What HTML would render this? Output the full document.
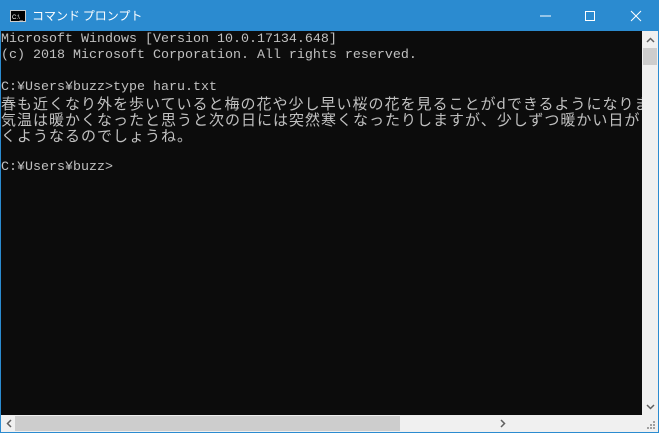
<!DOCTYPE html>
<html><head><meta charset="utf-8"><style>
html,body{margin:0;padding:0;width:659px;height:433px;overflow:hidden;background:#2b8bd0;}
#win{position:absolute;left:0;top:0;width:657px;height:431px;border:1px solid #2b8bd0;background:#2b8bd0;}
#title{position:absolute;left:0;top:0;width:657px;height:30px;background:#2b8bd0;}
#title .t{position:absolute;left:31px;top:7px;color:#fff;font:12px "Noto Sans CJK JP",sans-serif;line-height:16px;}
#con{position:absolute;left:0;top:30px;width:641px;height:384px;background:#0c0c0c;overflow:hidden;}
.l{position:absolute;left:0;height:16px;line-height:16px;color:#c0c0c0;white-space:pre;font-family:"Liberation Mono","Noto Sans CJK JP",monospace;font-size:13.33px;}
.j{font-family:"Noto Sans CJK JP","Liberation Mono",monospace;font-size:15px;letter-spacing:1px;}
#vs{position:absolute;left:641px;top:30px;width:16px;height:384px;background:#f0f0f0;}
#hs{position:absolute;left:0;top:414px;width:657px;height:17px;background:#f0f0f0;}
</style></head><body>
<div id="win">
<div id="title">
<svg style="position:absolute;left:9px;top:9px" width="16" height="12"><rect x="0.5" y="0.5" width="15" height="11" fill="#000" stroke="#ccc"/><text x="2" y="9" fill="#fff" font-size="6" font-family="Liberation Sans">C:\_</text></svg>
<div class="t">コマンド プロンプト</div>
<svg style="position:absolute;left:538px;top:9px" width="14" height="12"><line x1="1" y1="6" x2="12" y2="6" stroke="#fff"/></svg>
<svg style="position:absolute;left:583px;top:9px" width="14" height="12"><rect x="1.5" y="1.5" width="9" height="9" fill="none" stroke="#fff"/></svg>
<svg style="position:absolute;left:629px;top:9px" width="14" height="12"><path d="M1 1L11 11M11 1L1 11" stroke="#fff"/></svg>
</div>
<div id="con">
<div class="l" style="top:1px">Microsoft Windows [Version 10.0.17134.648]</div>
<div class="l" style="top:17px">(c) 2018 Microsoft Corporation. All rights reserved.</div>
<div class="l" style="top:49px">C:¥Users¥buzz&gt;type haru.txt</div>
<div class="l j" style="top:65px">春も近くなり外を歩いていると梅の花や少し早い桜の花を見ることがdできるようになりま</div>
<div class="l j" style="top:81px">気温は暖かくなったと思うと次の日には突然寒くなったりしますが、少しずつ暖かい日が</div>
<div class="l j" style="top:97px">くようなるのでしょうね。</div>
<div class="l" style="top:129px">C:¥Users¥buzz&gt;</div>
</div>
<div id="vs">
<svg style="position:absolute;left:4px;top:6px" width="9" height="6"><path d="M1 5L4.5 1.5L8 5" stroke="#606060" stroke-width="1.5" fill="none"/></svg>
<div style="position:absolute;left:1px;top:17px;width:14px;height:17px;background:#cdcdcd"></div>
<svg style="position:absolute;left:4px;top:373px" width="9" height="6"><path d="M1 1L4.5 4.5L8 1" stroke="#606060" stroke-width="1.5" fill="none"/></svg>
</div>
<div id="hs">
<svg style="position:absolute;left:5px;top:4px" width="6" height="9"><path d="M5 1L1.5 4.5L5 8" stroke="#606060" stroke-width="1.5" fill="none"/></svg>
<div style="position:absolute;left:14px;top:1px;width:385px;height:15px;background:#cdcdcd"></div>
<svg style="position:absolute;left:499px;top:4px" width="6" height="9"><path d="M1 1L4.5 4.5L1 8" stroke="#606060" stroke-width="1.5" fill="none"/></svg>
<svg style="position:absolute;left:645px;top:5px" width="10" height="10" fill="#a0a0a0"><rect x="7" y="1" width="2" height="2"/><rect x="4" y="4" width="2" height="2"/><rect x="7" y="4" width="2" height="2"/><rect x="1" y="7" width="2" height="2"/><rect x="4" y="7" width="2" height="2"/><rect x="7" y="7" width="2" height="2"/></svg>
</div>
</div>
</body></html>
